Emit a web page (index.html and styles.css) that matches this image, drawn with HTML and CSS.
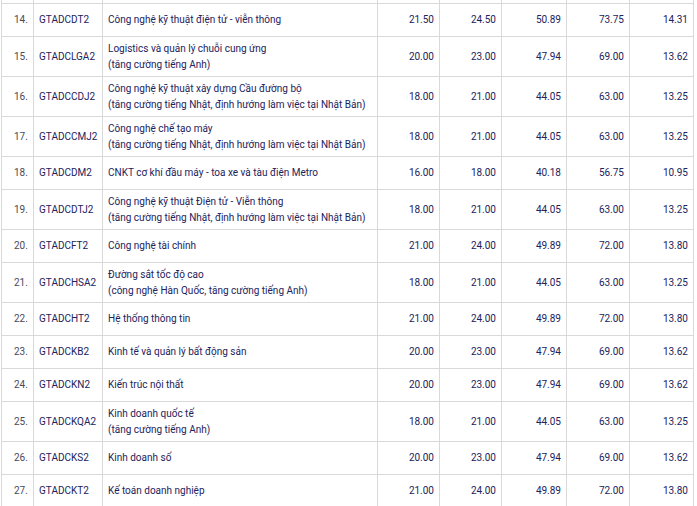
FILE: index.html
```html
<!DOCTYPE html>
<html lang="vi">
<head>
<meta charset="utf-8">
<link rel="stylesheet" href="styles.css">
</head>
<body>
<table class="scores">
<colgroup>
<col class="c-no"><col class="c-code"><col class="c-name"><col class="c-n1"><col class="c-n2"><col class="c-n3"><col class="c-n4"><col class="c-n5">
</colgroup>
<tbody>
<tr class="cut"><td></td><td></td><td></td><td></td><td></td><td></td><td></td><td></td></tr>
<tr><td class="no">14.</td><td class="code">GTADCDT2</td><td class="name">Công nghệ kỹ thuật điện tử - viễn thông</td><td class="num">21.50</td><td class="num">24.50</td><td class="num">50.89</td><td class="num">73.75</td><td class="num">14.31</td></tr>
<tr class="two"><td class="no">15.</td><td class="code">GTADCLGA2</td><td class="name">Logistics và quản lý chuỗi cung ứng<br>(tăng cường tiếng Anh)</td><td class="num">20.00</td><td class="num">23.00</td><td class="num">47.94</td><td class="num">69.00</td><td class="num">13.62</td></tr>
<tr class="two"><td class="no">16.</td><td class="code">GTADCCDJ2</td><td class="name">Công nghệ kỹ thuật xây dựng Cầu đường bộ<br>(tăng cường tiếng Nhật, định hướng làm việc tại Nhật Bản)</td><td class="num">18.00</td><td class="num">21.00</td><td class="num">44.05</td><td class="num">63.00</td><td class="num">13.25</td></tr>
<tr class="two"><td class="no">17.</td><td class="code">GTADCCMJ2</td><td class="name">Công nghệ chế tạo máy<br>(tăng cường tiếng Nhật, định hướng làm việc tại Nhật Bản)</td><td class="num">18.00</td><td class="num">21.00</td><td class="num">44.05</td><td class="num">63.00</td><td class="num">13.25</td></tr>
<tr><td class="no">18.</td><td class="code">GTADCDM2</td><td class="name">CNKT cơ khí đầu máy - toa xe và tàu điện Metro</td><td class="num">16.00</td><td class="num">18.00</td><td class="num">40.18</td><td class="num">56.75</td><td class="num">10.95</td></tr>
<tr class="two"><td class="no">19.</td><td class="code">GTADCDTJ2</td><td class="name">Công nghệ kỹ thuật Điện tử - Viễn thông<br>(tăng cường tiếng Nhật, định hướng làm việc tại Nhật Bản)</td><td class="num">18.00</td><td class="num">21.00</td><td class="num">44.05</td><td class="num">63.00</td><td class="num">13.25</td></tr>
<tr><td class="no">20.</td><td class="code">GTADCFT2</td><td class="name">Công nghệ tài chính</td><td class="num">21.00</td><td class="num">24.00</td><td class="num">49.89</td><td class="num">72.00</td><td class="num">13.80</td></tr>
<tr class="two"><td class="no">21.</td><td class="code">GTADCHSA2</td><td class="name">Đường sắt tốc độ cao<br>(công nghệ Hàn Quốc, tăng cường tiếng Anh)</td><td class="num">18.00</td><td class="num">21.00</td><td class="num">44.05</td><td class="num">63.00</td><td class="num">13.25</td></tr>
<tr><td class="no">22.</td><td class="code">GTADCHT2</td><td class="name">Hệ thống thông tin</td><td class="num">21.00</td><td class="num">24.00</td><td class="num">49.89</td><td class="num">72.00</td><td class="num">13.80</td></tr>
<tr><td class="no">23.</td><td class="code">GTADCKB2</td><td class="name">Kinh tế và quản lý bất động sản</td><td class="num">20.00</td><td class="num">23.00</td><td class="num">47.94</td><td class="num">69.00</td><td class="num">13.62</td></tr>
<tr><td class="no">24.</td><td class="code">GTADCKN2</td><td class="name">Kiến trúc nội thất</td><td class="num">20.00</td><td class="num">23.00</td><td class="num">47.94</td><td class="num">69.00</td><td class="num">13.62</td></tr>
<tr class="two"><td class="no">25.</td><td class="code">GTADCKQA2</td><td class="name">Kinh doanh quốc tế<br>(tăng cường tiếng Anh)</td><td class="num">18.00</td><td class="num">21.00</td><td class="num">44.05</td><td class="num">63.00</td><td class="num">13.25</td></tr>
<tr><td class="no">26.</td><td class="code">GTADCKS2</td><td class="name">Kinh doanh số</td><td class="num">20.00</td><td class="num">23.00</td><td class="num">47.94</td><td class="num">69.00</td><td class="num">13.62</td></tr>
<tr><td class="no">27.</td><td class="code">GTADCKT2</td><td class="name">Kế toán doanh nghiệp</td><td class="num">21.00</td><td class="num">24.00</td><td class="num">49.89</td><td class="num">72.00</td><td class="num">13.80</td></tr>
<tr class="cut-bottom"><td></td><td></td><td></td><td></td><td></td><td></td><td></td><td></td></tr>
</tbody>
</table>
</body>
</html>
```
FILE: styles.css
```css
html, body {
  margin: 0;
  padding: 0;
  background: #ffffff;
  overflow: hidden;
}

.scores {
  margin-left: 1px;
  border-collapse: collapse;
  table-layout: fixed;
  width: 693px;
  font-family: Roboto, "Liberation Sans", Arial, sans-serif;
  font-size: 10px;
  color: #22225c;
}

.c-no { width: 32px; }
.c-code { width: 69px; }
.c-name { width: 275px; }
.c-n1 { width: 62px; }
.c-n2 { width: 62px; }
.c-n3 { width: 65px; }
.c-n4 { width: 63px; }
.c-n5 { width: 64px; }

.scores td {
  border: 1px solid #d9d9d9;
  padding: 4px 5px;
  line-height: 15.5px;
  height: 24px;
  vertical-align: middle;
  white-space: nowrap;
}

.scores tr.cut td {
  border-top: none;
  height: 3px;
  padding: 0;
  line-height: 0;
}

.scores tr.cut-bottom td {
  border-bottom: none;
  height: 4px;
  padding: 0;
  line-height: 0;
}

.scores td.no {
  padding-left: 12px;
  color: #4a4a5a;
}

.scores td.num {
  text-align: right;
  padding-right: 5px;
}
```
